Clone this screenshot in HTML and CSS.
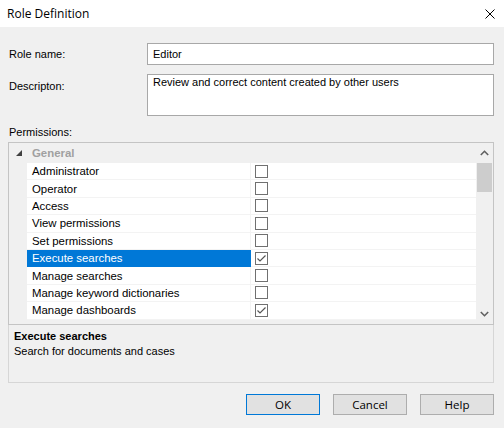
FILE: index.html
```html
<!DOCTYPE html>
<html>
<head>
<meta charset="utf-8">
<link rel="stylesheet" href="styles.css">
</head>
<body>
<div class="titlebar">
  <span class="title">Role Definition</span>
  <svg class="close" width="10" height="10" viewBox="0 0 10 10"><path d="M0.5 0.5 L9.5 9.5 M9.5 0.5 L0.5 9.5" stroke="#000" stroke-width="1" fill="none"/></svg>
</div>
<div class="main">
  <div class="field">
    <span class="label">Role name:</span>
    <div class="input">Editor</div>
  </div>
  <div class="field field-top">
    <span class="label label-top">Descripton:</span>
    <div class="input textarea">Review and correct content created by other users</div>
  </div>
  <div class="perm-label">Permissions:</div>
  <div class="grid">
    <div class="tree">
      <div class="row header">
        <div class="gutter"><svg width="8" height="8" viewBox="0 0 8 8"><path d="M7 1 L7 7 L1 7 Z" fill="#404040"/></svg></div>
        <div class="name hname">General</div>
      </div>
      <div class="row"><div class="gutter"></div><div class="name">Administrator</div><div class="val"><span class="cb"></span></div></div>
      <div class="row"><div class="gutter"></div><div class="name">Operator</div><div class="val"><span class="cb"></span></div></div>
      <div class="row"><div class="gutter"></div><div class="name">Access</div><div class="val"><span class="cb"></span></div></div>
      <div class="row"><div class="gutter"></div><div class="name">View permissions</div><div class="val"><span class="cb"></span></div></div>
      <div class="row"><div class="gutter"></div><div class="name">Set permissions</div><div class="val"><span class="cb"></span></div></div>
      <div class="row"><div class="gutter"></div><div class="name selected">Execute searches</div><div class="val"><span class="cb"><svg width="11" height="11" viewBox="0 0 11 11"><path d="M1.5 5.5 L4 8 L9.5 2.5" stroke="#555" stroke-width="1.2" fill="none"/></svg></span></div></div>
      <div class="row"><div class="gutter"></div><div class="name">Manage searches</div><div class="val"><span class="cb"></span></div></div>
      <div class="row"><div class="gutter"></div><div class="name">Manage keyword dictionaries</div><div class="val"><span class="cb"></span></div></div>
      <div class="row"><div class="gutter"></div><div class="name">Manage dashboards</div><div class="val"><span class="cb"><svg width="11" height="11" viewBox="0 0 11 11"><path d="M1.5 5.5 L4 8 L9.5 2.5" stroke="#555" stroke-width="1.2" fill="none"/></svg></span></div></div>
    </div>
    <div class="scroll">
      <div class="arrow"><svg width="9" height="6" viewBox="0 0 9 6"><path d="M0.8 5 L4.5 1.3 L8.2 5" stroke="#606060" stroke-width="1.6" fill="none"/></svg></div>
      <div class="thumb"></div>
      <div class="track"></div>
      <div class="arrow"><svg width="9" height="6" viewBox="0 0 9 6"><path d="M0.8 1 L4.5 4.7 L8.2 1" stroke="#606060" stroke-width="1.6" fill="none"/></svg></div>
    </div>
  </div>
  <div class="desc">
    <div class="desc-title">Execute searches</div>
    <div class="desc-text">Search for documents and cases</div>
  </div>
  <div class="buttons">
    <div class="btn btn-default">OK</div>
    <div class="btn">Cancel</div>
    <div class="btn">Help</div>
  </div>
</div>
</body>
</html>
```
FILE: styles.css
```css
html, body {
  margin: 0;
  padding: 0;
  width: 504px;
  height: 428px;
  overflow: hidden;
  background: #f0f0f0;
  font-family: "Liberation Sans", Arial, sans-serif;
  font-size: 11px;
  color: #000;
}
.titlebar {
  height: 27px;
  background: #fff;
  display: flex;
  align-items: center;
  justify-content: space-between;
  padding: 0 9px 0 7px;
  font-family: "Open Sans", "Noto Sans", sans-serif;
  font-size: 12px;
}
.close { display: block; }
.main {
  padding: 16px 10px 0 8px;
}
.field {
  display: flex;
  align-items: center;
}
.field-top {
  align-items: flex-start;
  margin-top: 9px;
}
.label {
  width: 138px;
  padding-left: 1px;
  flex: none;
}
.label-top { padding-top: 6px; }
.input {
  flex: 1;
  height: 22px;
  box-sizing: border-box;
  border: 1px solid #a8a8a8;
  background: #fff;
  padding: 3px 5px;
  line-height: 14px;
}
.textarea {
  height: 42px;
  padding: 0 5px;
}
.perm-label {
  padding: 9px 0 0 1px;
  line-height: 14px;
  margin-bottom: 3px;
}
.grid {
  height: 183px;
  box-sizing: border-box;
  border: 1px solid #c4c4c4;
  display: flex;
  background: #f0f0f0;
}
.tree {
  flex: 1;
  display: flex;
  flex-direction: column;
  font-size: 11.4px;
}
.row {
  display: flex;
  height: 17.4px;
  box-sizing: border-box;
}
.row.header { height: 20px; }
.gutter {
  width: 18px;
  flex: none;
  display: flex;
  align-items: center;
  padding-left: 6px;
  box-sizing: border-box;
}
.name {
  width: 224px;
  flex: none;
  box-sizing: border-box;
  padding-left: 5px;
  background: #fff;
  border-bottom: 1px solid #f3f3f3;
  border-right: 1px solid #f3f3f3;
  display: flex;
  align-items: center;
}
.hname {
  background: transparent;
  border: none;
  color: #a0a0a0;
  font-weight: bold;
}
.name.selected {
  background: #0078d7;
  color: #fff;
  border-color: #0078d7;
}
.val {
  flex: 1;
  background: #fff;
  border-bottom: 1px solid #f3f3f3;
  display: flex;
  align-items: center;
  padding-left: 4px;
}
.cb {
  width: 13px;
  height: 13px;
  box-sizing: border-box;
  border: 1px solid #707070;
  background: #fff;
  display: flex;
  align-items: center;
  justify-content: center;
}
.cb svg { display: block; }
.scroll {
  width: 17px;
  flex: none;
  display: flex;
  flex-direction: column;
  background: #f0f0f0;
}
.arrow {
  height: 20px;
  display: flex;
  align-items: center;
  justify-content: center;
}
.arrow svg { display: block; }
.thumb {
  height: 29px;
  margin: 0 1px;
  background: #cdcdcd;
}
.track { flex: 1; }
.desc {
  height: 58px;
  box-sizing: border-box;
  border: 1px solid #d6d6d6;
  border-top: none;
  padding: 4px 5px;
  line-height: 15px;
}
.desc-title { font-weight: bold; }
.buttons {
  display: flex;
  justify-content: flex-end;
  gap: 13px;
  margin-top: 11px;
}
.btn {
  width: 74px;
  height: 21px;
  box-sizing: border-box;
  border: 1px solid #adadad;
  background: #e1e1e1;
  display: flex;
  align-items: center;
  justify-content: center;
  font-family: "Open Sans", "Noto Sans", sans-serif;
  font-size: 11.5px;
}
.btn-default {
  border-color: #0078d7;
}
```
